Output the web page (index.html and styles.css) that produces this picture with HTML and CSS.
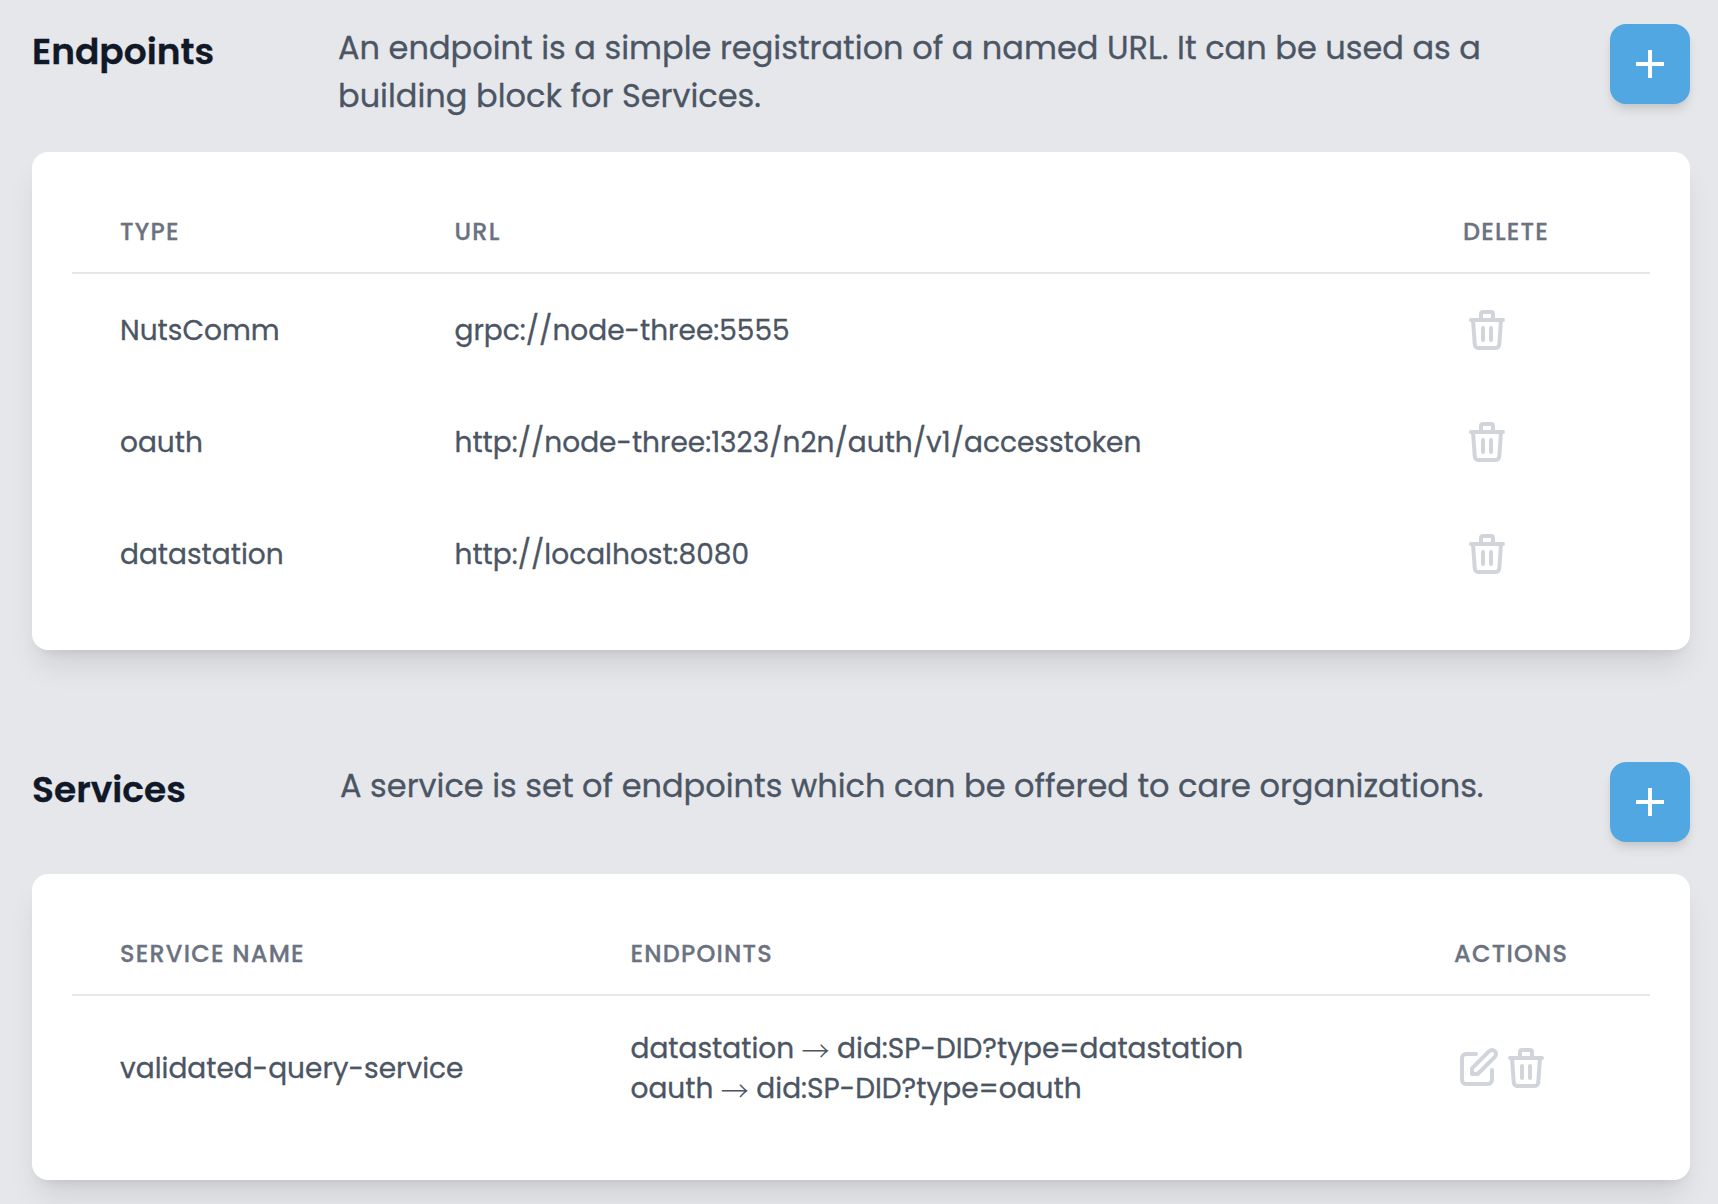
FILE: index.html
```
<!DOCTYPE html>
<html lang="en">
<head>
<meta charset="utf-8">
<title>Endpoints and services</title>
<link rel="stylesheet" href="styles.css">
</head>
<body>
<svg class="sprite" aria-hidden="true">
  <symbol id="trash" viewBox="0 0 24 24"><path d="M19 7l-.867 12.142A2 2 0 0116.138 21H7.862a2 2 0 01-1.995-1.858L5 7m5 4v6m4-6v6m1-10V4a1 1 0 00-1-1h-4a1 1 0 00-1 1v3M4 7h16"/></symbol>
  <symbol id="edit" viewBox="0 0 24 24"><path d="M11 5H6a2 2 0 00-2 2v11a2 2 0 002 2h11a2 2 0 002-2v-5m-1.414-9.414a2 2 0 112.828 2.828L11.828 15H9v-2.828l8.586-8.586z"/></symbol>
</svg>
<main class="page">
  <section class="section">
    <header class="section-head">
      <h2 class="title">Endpoints</h2>
      <p class="intro">An endpoint is a simple registration of a named URL. It can be used as a<br>building block for Services.</p>
      <button class="add" aria-label="Add endpoint"><svg class="plus" viewBox="0 0 28 28"><path d="M14 0v28M0 14h28"/></svg></button>
    </header>
    <div class="card">
      <div class="row row-head cols-endpoints"><span>Type</span><span>URL</span><span>Delete</span></div>
      <div class="row cols-endpoints"><span class="cell">NutsComm</span><span class="cell">grpc://node-three:5555</span><span class="actions"><svg class="icon"><use href="#trash"/></svg></span></div>
      <div class="row cols-endpoints"><span class="cell">oauth</span><span class="cell">http://node-three:1323/n2n/auth/v1/accesstoken</span><span class="actions"><svg class="icon"><use href="#trash"/></svg></span></div>
      <div class="row cols-endpoints"><span class="cell">datastation</span><span class="cell">http://localhost:8080</span><span class="actions"><svg class="icon"><use href="#trash"/></svg></span></div>
    </div>
  </section>
  <section class="section">
    <header class="section-head">
      <h2 class="title title-services">Services</h2>
      <p class="intro">A service is set of endpoints which can be offered to care organizations.</p>
      <button class="add" aria-label="Add service"><svg class="plus" viewBox="0 0 28 28"><path d="M14 0v28M0 14h28"/></svg></button>
    </header>
    <div class="card">
      <div class="row row-head cols-services"><span>Service name</span><span>Endpoints</span><span>Actions</span></div>
      <div class="row row-tall cols-services">
        <span class="cell">validated-query-service</span>
        <div class="cell">
          <div>datastation <span class="arrow">→</span> did:SP-DID?type=datastation</div>
          <div>oauth <span class="arrow">→</span> did:SP-DID?type=oauth</div>
        </div>
        <span class="actions"><svg class="icon"><use href="#edit"/></svg><svg class="icon"><use href="#trash"/></svg></span>
      </div>
    </div>
  </section>
</main>
</body>
</html>
```
FILE: styles.css
```
* { box-sizing: border-box; }
body {
  margin: 0;
  height: 1204px;
  overflow: hidden;
  background: #e5e7eb;
  color: #4b5563;
  font-family: Poppins, Inter, sans-serif;
  font-size: 28px;
  line-height: 40px;
  -webkit-text-stroke: .3px;
}
.sprite { display: none; }
.page { padding: 24px 28px 0 32px; display: flex; flex-direction: column; gap: 112px; }
.section-head { display: flex; align-items: flex-start; margin-bottom: 32px; }
.title { width: 306px; margin: 0; color: #111827; font-size: 36px; font-weight: 600; line-height: 56px; }
.title-services { width: 308px; }
.intro { margin: 0; flex: 1; font-size: 32px; line-height: 48px; white-space: nowrap; }
.add {
  display: grid;
  place-items: center;
  width: 80px;
  height: 80px;
  padding: 0;
  border: 0;
  border-radius: 16px;
  background: #51a7e2;
  box-shadow: 0 8px 12px -2px rgba(0,0,0,.1), 0 4px 8px -4px rgba(0,0,0,.1);
}
.plus { width: 28px; height: 28px; stroke: #fff; stroke-width: 4; }
.section-head, .card { width: 1658px; }
.card {
  padding: 40px;
  border-radius: 16px;
  background: #fff;
  box-shadow: 0 20px 30px -6px rgba(0,0,0,.1), 0 8px 12px -8px rgba(0,0,0,.1);
}
.row { display: grid; align-items: center; height: 112px; padding-left: 48px; white-space: nowrap; }
.row-tall { height: 144px; }
.row-head {
  height: 82px;
  border-bottom: 2px solid #e5e7eb;
  color: #6b7280;
  font-size: 24px;
  font-weight: 500;
  line-height: 32px;
  letter-spacing: 1.2px;
  text-transform: uppercase;
}
.cell { padding-top: 2px; }
.cols-endpoints { grid-template-columns: 334.5px 1008.5px 1fr; }
.cols-services { grid-template-columns: 510.5px 823.5px 1fr; }
.actions { display: flex; }
.icon { width: 48px; height: 48px; fill: none; stroke: #d1d5db; stroke-width: 2; stroke-linecap: round; stroke-linejoin: round; }
.arrow { font-family: "Noto Sans CJK JP", sans-serif; font-weight: 300; line-height: 0; vertical-align: -4px; -webkit-text-stroke: 0; }
```
